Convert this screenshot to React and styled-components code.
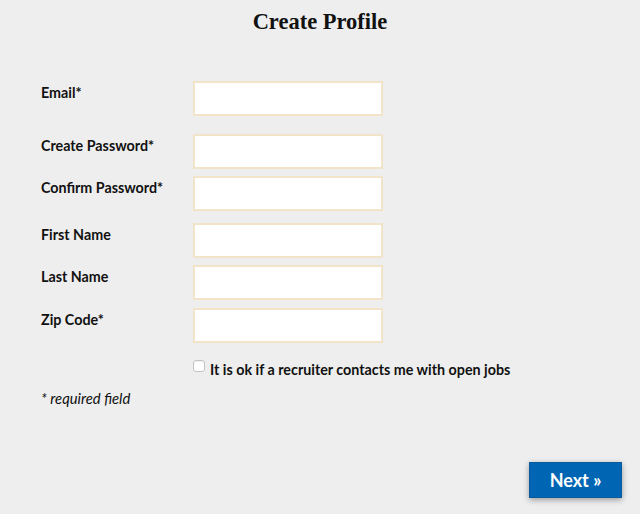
import React from 'react';
import styled, { createGlobalStyle } from 'styled-components';

const GlobalStyle = createGlobalStyle`
  html, body {
    margin: 0;
    padding: 0;
    background: #eeeeee;
  }
  body {
    font-family: Lato, "Open Sans", sans-serif;
    color: #111;
  }
`;

const Page = styled.div`
  height: 514px;
  box-sizing: border-box;
  display: flex;
  flex-direction: column;
  padding: 7px 18px 16px 41px;
`;

const Title = styled.h1`
  margin: 0 -18px 0 -41px;
  text-align: center;
  font-family: "Liberation Serif", serif;
  font-weight: 700;
  font-size: 22.5px;
  line-height: 30px;
  color: #111;
`;

const Form = styled.form`
  margin-top: 44px;
  display: flex;
  flex-direction: column;
`;

const Row = styled.div`
  display: grid;
  grid-template-columns: 152px 190px;
  margin-top: ${p => p.$gap}px;
`;

const Label = styled.label`
  padding-top: 3px;
  font-size: 14.3px;
  line-height: 18px;
  font-weight: 700;
`;

const Input = styled.input`
  box-sizing: border-box;
  width: 190px;
  height: 35px;
  margin: 0;
  border: 2px solid #f2e4c8;
  background: #ffffff;
  outline: none;
`;

const CheckRow = styled.div`
  display: flex;
  align-items: flex-start;
  margin-top: 17px;
  padding-left: 152px;
`;

const Check = styled.input`
  appearance: none;
  box-sizing: border-box;
  width: 12px;
  height: 12px;
  margin: 0 5px 0 0;
  border: 1px solid #c4c4c4;
  border-radius: 3px;
  background: #fff;
  box-shadow: inset 0 1px 1px rgba(0,0,0,0.06);
`;

const CheckText = styled.span`
  font-size: 14.3px;
  line-height: 18px;
  font-weight: 700;
  margin-top: 1px;
`;

const Note = styled.p`
  margin: 10px 0 0;
  font-size: 14.8px;
  line-height: 18px;
  font-style: italic;
`;

const Footer = styled.div`
  margin-top: auto;
  display: flex;
  justify-content: flex-end;
`;

const NextButton = styled.button`
  width: 93px;
  height: 36px;
  border: 1px solid #0a5a9c;
  background: #0066b3;
  color: #fff;
  font-family: Lato, "Open Sans", sans-serif;
  font-weight: 700;
  font-size: 18px;
  box-shadow: 0 2px 6px rgba(0,0,0,0.35);
  cursor: pointer;
`;

const fields = [
  { label: 'Email*', gap: 0, type: 'email' },
  { label: 'Create Password*', gap: 18, type: 'password' },
  { label: 'Confirm Password*', gap: 7, type: 'password' },
  { label: 'First Name', gap: 12, type: 'text' },
  { label: 'Last Name', gap: 7, type: 'text' },
  { label: 'Zip Code*', gap: 8, type: 'text' },
];

export default function App() {
  return (
    <>
      <GlobalStyle />
      <Page>
        <Title>Create Profile</Title>
        <Form onSubmit={e => e.preventDefault()}>
          {fields.map(f => (
            <Row key={f.label} $gap={f.gap}>
              <Label>{f.label}</Label>
              <Input type={f.type} />
            </Row>
          ))}
          <CheckRow>
            <Check type="checkbox" />
            <CheckText>It is ok if a recruiter contacts me with open jobs</CheckText>
          </CheckRow>
          <Note>* required field</Note>
        </Form>
        <Footer>
          <NextButton>Next »</NextButton>
        </Footer>
      </Page>
    </>
  );
}
